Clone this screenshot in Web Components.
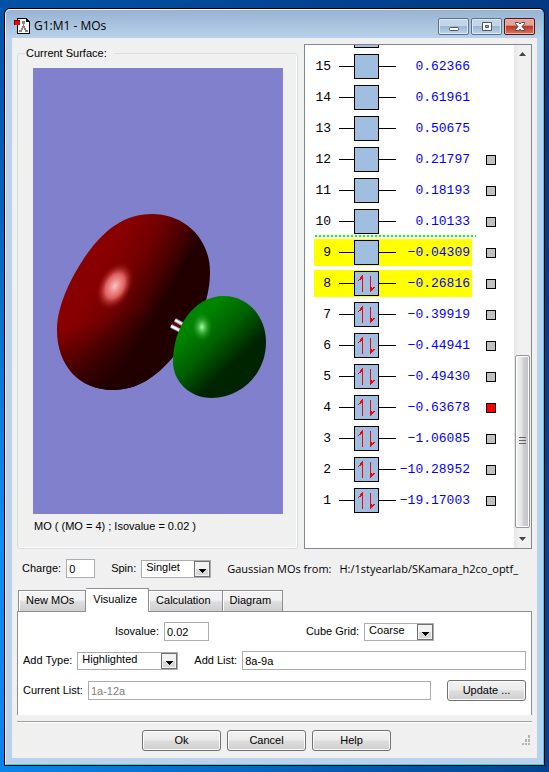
<!DOCTYPE html>
<html lang="en">
<head>
<meta charset="utf-8">
<title>G1:M1 - MOs</title>
<style>
	body {
		margin: 0;
		height: 100vh;
		display: flex;
		font: 11px/13px "Liberation Sans", Arial, sans-serif;
		color: #000;
		background:
			linear-gradient(to right, rgba(0, 50, 120, 0) 0%, rgba(0, 50, 120, 0.8) 100%),
			linear-gradient(#0352a6 0%, #0562bd 25%, #0c8ff2 70%, #0a84ea 100%);
		--line: #8b8e94;
		--field-line: #abadb3;
		--face: #f0f0f0;
		--ui-wide: "Open Sans", "Noto Sans", sans-serif;
	}
</style>
</head>
<body>
<mo-window heading="G1:M1 - MOs">
	<mo-columns>
		<group-box legend="Current Surface:">
			<orbital-surface></orbital-surface>
			<span slot="caption">MO ( (MO = 4) ; Isovalue = 0.02 )</span>
		</group-box>
		<orbital-list></orbital-list>
	</mo-columns>
	<field-row class="status">
		<text-field label="Charge:" value="0" size="29"></text-field>
		<select-field label="Spin:" value="Singlet" size="70"></select-field>
		<source-path from="Gaussian MOs from:" path="H:/1styearlab/SKamara_h2co_optf_"></source-path>
	</field-row>
	<tab-panel tabs="New MOs,Visualize,Calculation,Diagram" selected="1">
		<field-row spread>
			<text-field label="Isovalue:" value="0.02" size="45"></text-field>
			<select-field label="Cube Grid:" value="Coarse" size="70"></select-field>
		</field-row>
		<field-row>
			<select-field label="Add Type:" value="Highlighted" size="101"></select-field>
			<text-field label="Add List:" value="8a-9a" grow></text-field>
		</field-row>
		<field-row>
			<text-field label="Current List:" value="1a-12a" grow disabled></text-field>
			<push-button>Update ...</push-button>
		</field-row>
	</tab-panel>
	<push-button slot="actions">Ok</push-button>
	<push-button slot="actions">Cancel</push-button>
	<push-button slot="actions">Help</push-button>
</mo-window>

<script>
(function() {
	function define(name, render) {
		customElements.define(name, class extends HTMLElement {
			constructor() {
				super();
				this._shadowRoot = this.attachShadow({mode: "open"});
			}

			connectedCallback() {
				let template = document.createElement("template");
				template.innerHTML = render(this);
				this._shadowRoot.replaceChildren(template.content.cloneNode(true));
			}
		});
	}

	define("mo-window", el => `
		<style>
		:host {
			flex: 1;
			min-width: 0;
			box-sizing: border-box;
			display: flex;
			margin: 8px 4px 6px;
			border: 1px solid #000;
			border-radius: 6px 6px 0 0;
		}
		.frame {
			flex: 1;
			min-width: 0;
			display: flex;
			flex-direction: column;
			padding: 0 6px 6px;
			border: 1px solid #34d0ea;
			border-top-color: #f4f9ff;
			border-left-color: #e4f0fc;
			border-radius: 5px 5px 0 0;
			background: linear-gradient(#97b3d2 0px, #b9d1ea 28px, #b9d1ea 100%);
		}
		header {
			display: flex;
			gap: 2px;
			height: 28px;
			padding: 0 2px;
		}
		h1 {
			flex: 1;
			margin: 0 0 0 2px;
			font: 12px/32px var(--ui-wide);
		}
		header > svg { margin-top: 8px; }
		header button {
			width: 31px;
			height: 17px;
			margin-top: 8px;
			padding: 0;
			border: 1px solid #5f7288;
			border-radius: 2px;
			box-shadow: inset 0 0 0 1px #dce8f5;
			background: linear-gradient(#c3d5e8 45%, #9db6d1 50%, #bcd3eb);
		}
		header button svg { display: block; margin: auto; }
		header .close {
			border-color: #521516;
			box-shadow: inset 0 0 0 1px #eab6ac;
			background: linear-gradient(#e4a397 40%, #bd3a26 50%, #d8765c);
		}
		main {
			flex: 1;
			min-height: 0;
			display: flex;
			flex-direction: column;
			padding: 6px 5px 7px;
			background: var(--face);
		}
		footer {
			display: flex;
			align-items: flex-end;
			margin-top: 6px;
			padding-top: 8px;
			border-top: 1px solid #a0a0a0;
			box-shadow: inset 0 1px #fff;
		}
		.actions {
			flex: 1;
			display: flex;
			justify-content: center;
			gap: 6px;
		}
		</style>
		<div class="frame">
			<header>
				<svg width="16" height="16" viewBox="0 0 16 16" shape-rendering="crispEdges">
					<path d="M3 0h10v1h1v1h1v1h1v13H3z"/>
					<path d="M4 1h8v3h3v11H4z" fill="#fff"/>
					<path d="M8 3h3v3H8zM9 6h1v3H9zM8 8h3v2H8zM7 10h2v2H7zM10 10h2v2h-2zM5 12h3v2H5zM11 12h3v2h-3z" fill="#858585"/>
					<path d="M0 2h6v5H0z" fill="#700"/>
					<path d="M1 3h4v3H1z" fill="red"/>
					<path d="M1 3h4v3H1z" fill="none" stroke="red"/>
				</svg>
				<h1>${el.getAttribute("heading")}</h1>
				<button aria-label="Minimize"><svg width="12" height="11"><rect x="1.500" y="6.500" width="9" height="3" rx="1" fill="#fff" stroke="#4a5566"/></svg></button>
				<button aria-label="Restore"><svg width="12" height="11"><path d="M1.500 1.500h9v8h-9zM4.500 4.500v2h3v-2z" fill="#fff" fill-rule="evenodd" stroke="#4a5566"/></svg></button>
				<button class="close" aria-label="Close"><svg width="12" height="11"><path d="M1.500 1.500h3L6 3l1.500-1.500h3v1.200L8 5.500l2.500 2.800v1.200h-3L6 8 4.500 9.500h-3V8.300L4 5.500 1.500 2.700z" fill="#fff" stroke="#4a4455"/></svg></button>
			</header>
			<main>
				<slot></slot>
				<footer>
					<div class="actions"><slot name="actions"></slot></div>
					<svg width="16" height="16" fill="#b4b4b4" shape-rendering="crispEdges">
						<path d="M12 0h1v2h-1zM9 4h1v1H9zM12 4h1v2h-1zM9 5h1v1H9zM6 8h1v1H6zM9 8h1v1H9zM12 8h1v1h-1z" stroke="#b4b4b4"/>
					</svg>
				</footer>
			</main>
		</div>
	`);

	define("mo-columns", () => `
		<style>
		:host {
			flex: 1;
			min-height: 0;
			display: flex;
			gap: 6px;
		}
		</style>
		<slot></slot>
	`);

	define("group-box", el => `
		<style>
		:host {
			flex: 1;
			min-width: 0;
			display: flex;
		}
		fieldset {
			flex: 1;
			min-width: 0;
			display: flex;
			flex-direction: column;
			box-sizing: border-box;
			margin: 3px 0 0;
			padding: 8px 14px 15px 15px;
			border: 1px solid #d5dfe5;
			border-radius: 3px;
			box-shadow: inset -1px -1px #fff;
		}
		legend {
			margin-left: -8px;
			padding: 0 8px 0 1px;
		}
		.caption { margin-top: 6px; padding-left: 1px; }
		</style>
		<fieldset>
			<legend>${el.getAttribute("legend")}</legend>
			<slot></slot>
			<div class="caption"><slot name="caption"></slot></div>
		</fieldset>
	`);

	define("orbital-surface", () => `
		<style>
		:host {
			flex: 1;
			min-height: 0;
			display: flex;
			background: #8080cc;
		}
		svg { flex: 1; min-width: 0; }
		</style>
		<svg viewBox="0 0 250 446" role="img" aria-label="Molecular orbital">
			<defs>
				<linearGradient id="red" gradientUnits="userSpaceOnUse" x1="70" y1="200" x2="131" y2="234">
					<stop offset="0" stop-color="#880000"/>
					<stop offset="0.35" stop-color="#760000"/>
					<stop offset="0.7" stop-color="#500000"/>
					<stop offset="1" stop-color="#230000"/>
				</linearGradient>
				<linearGradient id="redLow" gradientUnits="userSpaceOnUse" x1="46" y1="256" x2="66" y2="322">
					<stop offset="0" stop-color="#200000" stop-opacity="0"/>
					<stop offset="1" stop-color="#200000" stop-opacity="0.9"/>
				</linearGradient>
				<linearGradient id="green" gradientUnits="userSpaceOnUse" x1="168" y1="250" x2="206" y2="290">
					<stop offset="0" stop-color="#008400"/>
					<stop offset="0.5" stop-color="#006000"/>
					<stop offset="1" stop-color="#002400"/>
				</linearGradient>
				<radialGradient id="redShine">
					<stop offset="0" stop-color="#ffc4c4"/>
					<stop offset="0.5" stop-color="#f07070" stop-opacity="0.85"/>
					<stop offset="1" stop-color="#900000" stop-opacity="0"/>
				</radialGradient>
				<radialGradient id="greenShine">
					<stop offset="0" stop-color="#a8ffa8"/>
					<stop offset="0.4" stop-color="#48b848" stop-opacity="0.8"/>
					<stop offset="1" stop-color="#008000" stop-opacity="0"/>
				</radialGradient>
				<path id="lobe" d="M119 146C151 146 177 170 177 204C177 238 160 266 140 289C124 308 105 322 80 322C46 322 24 297 24 262C24 236 40 206 54 186C72 161 92 146 119 146Z"/>
			</defs>
			<use href="#lobe" fill="url(#red)"/>
			<use href="#lobe" fill="url(#redLow)"/>
			<ellipse cx="82" cy="218" rx="17" ry="26" transform="rotate(28 82 218)" fill="url(#redShine)"/>
			<path d="M139 255L148 259" stroke="#600000" stroke-width="4"/>
			<path d="M142 252L151 257M138 258L148 263" stroke="#aaa" stroke-width="4"/>
			<path d="M142 252L151 257M138 258L148 263" stroke="#fff" stroke-width="2"/>
			<path d="M191 228C216 228 233 250 233 274C233 306 208 330 179 330C155 330 140 312 140 294C140 260 160 228 191 228Z" fill="url(#green)"/>
			<ellipse cx="169" cy="259" rx="11" ry="15" fill="url(#greenShine)"/>
		</svg>
	`);

	const orbitals = [
		[16, "", 0], [15, "0.62366", 0], [14, "0.61961", 0], [13, "0.50675", 0],
		[12, "0.21797", 1], [11, "0.18193", 1], [10, "0.10133", 1],
		[9, "−0.04309", 1], [8, "−0.26816", 1], [7, "−0.39919", 1],
		[6, "−0.44941", 1], [5, "−0.49430", 1], [4, "−0.63678", 1],
		[3, "−1.06085", 1], [2, "−10.28952", 1], [1, "−19.17003", 1]
	];

	function orbitalRow([n, energy, marked]) {
		let state = [n === 8 || n === 9 ? "picked" : "", n === 10 ? "lumo" : ""].join(" ");
		let arrows = n <= 8 ? `
			<path d="M23 4h1v17h-1V8h-1v1h-2v1h-1V9h1V8h1V6h1V5h1z" fill="red" stroke="none"/>
			<path d="M31 5h1v11h1v1h1v-1h2v1h-1v1h-1v1h-1v1h-1v1h-1z" fill="red" stroke="none"/>` : "";
		return `
			<li class="${state}">
				<div class="level">
					<span class="n">${energy ? n : ""}</span>
					<svg width="57" height="25" fill="none" stroke="#000" shape-rendering="crispEdges">
						<path d="M0 12.500h57"/>
						<rect x="15.500" y=".5" width="24" height="24" fill="#a0bedf"/>
						${arrows}
					</svg>
					<span class="energy">${energy}</span>
				</div>
				${marked ? `<button class="mark ${n === 4 ? "current" : ""}" aria-label="Orbital ${n}"></button>` : ""}
			</li>`;
	}

	define("orbital-list", () => `
		<style>
		:host {
			flex: none;
			width: 226px;
			display: flex;
			border: 1px solid #828790;
			background: #fff;
			font: 13px/15px "Liberation Mono", "Courier New", monospace;
		}
		ol {
			flex: 1;
			display: flex;
			flex-direction: column;
			justify-content: flex-end;
			overflow: hidden;
			margin: 0;
			padding: 0 0 32px 9px;
			list-style: none;
		}
		li {
			flex: none;
			height: 31px;
			display: flex;
			align-items: center;
			gap: 14px;
			position: relative;
		}
		.level {
			width: 158px;
			height: 27px;
			display: flex;
			align-items: center;
			box-sizing: border-box;
			padding-right: 2px;
		}
		.picked .level { background: #ff0; }
		.lumo::after {
			content: "";
			position: absolute;
			left: 1px;
			bottom: 0;
			width: 161px;
			height: 2px;
			background: repeating-linear-gradient(to right, #0f0 0 2px, transparent 2px 4px);
		}
		.n {
			width: 17px;
			margin-right: 8px;
			text-align: right;
		}
		.energy {
			flex: 1;
			text-align: right;
			color: #00f;
		}
		.mark {
			width: 10px;
			height: 10px;
			padding: 0;
			border: 1px solid #000;
			background: #c0c0c0;
		}
		.current { background: #f00; }
		.scroll {
			width: 17px;
			display: flex;
			flex-direction: column;
			align-items: center;
			justify-content: space-between;
			background: linear-gradient(to right, #e6e6e6, #f0f0f0 30%, #f1f1f1);
		}
		.scroll svg { display: block; }
		.track {
			flex: 1;
			align-self: stretch;
			display: flex;
			align-items: flex-end;
			padding: 0 1px;
		}
		.thumb {
			flex: 1;
			height: 37%;
			display: flex;
			align-items: center;
			justify-content: center;
			border: 1px solid #979797;
			border-radius: 2px;
			box-shadow: inset 0 0 0 1px #fff;
			background: linear-gradient(to right, #f5f5f5, #e4e4e6 45%, #d0d1d5 55%, #c0c1c5);
		}
		</style>
		<ol>${orbitals.map(orbitalRow).join("")}</ol>
		<div class="scroll">
			<svg width="17" height="20"><path d="M5 11h7L8.500 7z" fill="#444"/></svg>
			<div class="track"><div class="thumb">
				<svg width="7" height="9" stroke="#666" shape-rendering="crispEdges"><path d="M0 .5h7M0 3.500h7M0 6.500h7"/></svg>
			</div></div>
			<svg width="17" height="20"><path d="M5 9h7l-3.500 4z" fill="#444"/></svg>
		</div>
	`);

	define("field-row", el => `
		<style>
		:host {
			display: flex;
			align-items: center;
			gap: 16px;
			min-height: 19px;
			padding: 0 5px;
		}
		:host([spread]) {
			justify-content: space-evenly;
			gap: 0;
			padding: 0;
		}
		:host(.status) { margin: 10px 0; }
		</style>
		<slot></slot>
	`);

	define("text-field", el => `
		<style>
		:host {
			display: flex;
			align-items: center;
			gap: 5px;
		}
		:host([grow]) { flex: 1; min-width: 0; }
		label { white-space: nowrap; }
		input {
			box-sizing: border-box;
			width: ${el.hasAttribute("grow") ? "100%" : el.getAttribute("size") + "px"};
			min-width: 0;
			height: 19px;
			padding: 0 2px;
			border: 1px solid var(--field-line);
			border-radius: 0;
			background: #fff;
			font: inherit;
			color: #000;
		}
		input:disabled { color: #808080; }
		</style>
		<label for="input">${el.getAttribute("label")}</label>
		<input id="input" type="text" value="${el.getAttribute("value")}" ${el.hasAttribute("disabled") ? "disabled" : ""}>
	`);

	define("select-field", el => `
		<style>
		:host {
			display: flex;
			align-items: center;
			gap: 5px;
		}
		label { white-space: nowrap; }
		.box {
			display: grid;
			width: ${el.getAttribute("size")}px;
		}
		select, svg { grid-area: 1 / 1; }
		select {
			appearance: none;
			height: 18px;
			padding: 0 18px 2px 4px;
			border: 1px solid var(--field-line);
			border-radius: 0;
			background: #fff;
			font: inherit;
			color: #000;
		}
		svg {
			justify-self: end;
			align-self: center;
			margin-right: 1px;
			pointer-events: none;
		}
		</style>
		<label for="select">${el.getAttribute("label")}</label>
		<div class="box">
			<select id="select"><option>${el.getAttribute("value")}</option></select>
			<svg width="16" height="16" shape-rendering="crispEdges">
				<rect x=".5" y=".5" width="15" height="15" fill="#f2f2f2" stroke="#707070"/>
				<path d="M2 8h12v6H2z" fill="#d8d8d8"/>
				<path d="M5 8h7v1h-1v1h-1v1H9v1H8v-1H7v-1H6V9H5z"/>
			</svg>
		</div>
	`);

	define("source-path", el => `
		<style>
		:host {
			flex: 1;
			min-width: 0;
			display: flex;
			gap: 8px;
			overflow: hidden;
			white-space: nowrap;
			font: 11px/16px var(--ui-wide);
		}
		</style>
		<span>${el.getAttribute("from")}</span>
		<span>${el.getAttribute("path")}</span>
	`);

	define("tab-panel", el => `
		<style>
		:host { display: block; }
		nav {
			display: flex;
			align-items: flex-end;
			padding-left: 1px;
		}
		button {
			height: 21px;
			padding: 0 11px 1px 7px;
			border: 1px solid var(--line);
			border-bottom: 0;
			border-radius: 0;
			box-shadow: inset 1px 1px #fff;
			background: linear-gradient(#f2f2f2 45%, #dddddd 55%, #cfcfcf);
			font: inherit;
			color: #000;
		}
		button + button { border-left-width: 0; }
		button[aria-selected="true"] {
			height: 24px;
			margin-bottom: -1px;
			padding-bottom: 3px;
			background: #fff;
			z-index: 1;
		}
		section {
			display: flex;
			flex-direction: column;
			gap: 10px;
			padding: 10px 0 14px;
			border: 1px solid var(--line);
			border-bottom: 0;
			background: #fff;
		}
		</style>
		<nav role="tablist">
			${el.getAttribute("tabs").split(",").map((tab, i) => `<button role="tab" aria-selected="${i === Number(el.getAttribute("selected"))}">${tab}</button>`).join("")}
		</nav>
		<section role="tabpanel"><slot></slot></section>
	`);

	define("push-button", () => `
		<style>
		:host { display: block; }
		button {
			display: block;
			width: 79px;
			height: 21px;
			padding: 0 0 1px;
			border: 1px solid #707070;
			border-radius: 3px;
			box-shadow: inset 0 0 0 1px #fcfcfc;
			background: linear-gradient(#f2f2f2, #ebebeb 48%, #dddddd 52%, #cfcfcf);
			font: inherit;
			color: #000;
		}
		</style>
		<button><slot></slot></button>
	`);
})();
</script>
</body>
</html>
